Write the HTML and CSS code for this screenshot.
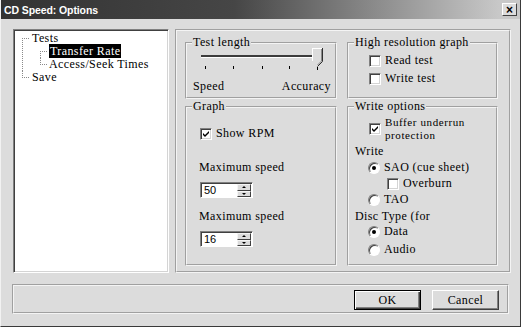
FILE: index.html
```html
<!DOCTYPE html>
<html lang="en">
<head>
    <meta charset="UTF-8">
    <title>CD Speed: Options</title>
    <link rel="stylesheet" href="styles.css">
</head>
<body>
    <div class="window">
        <div class="titlebar">
            <span class="title">CD Speed: Options</span>
            <span class="close">&#215;</span>
        </div>

        <div class="main">
            <div class="tree">
                <ul class="tree-root">
                    <li class="first"><span>Tests</span>
                        <ul>
                            <li class="first"><span class="selected">Transfer Rate</span></li>
                            <li class="last"><span>Access/Seek Times</span></li>
                        </ul>
                    </li>
                    <li class="last"><span>Save</span></li>
                </ul>
            </div>

            <div class="page">
                <fieldset class="group top-row">
                    <legend>Test length</legend>
                    <svg class="slider" width="126" height="24" viewBox="0 0 126 24" shape-rendering="crispEdges">
                        <rect x="1" y="8" width="117" height="2" fill="#3c3c3c"/>
                        <rect x="1" y="10" width="117" height="1" fill="#ffffff"/>
                        <g stroke="#000">
                            <line x1="5.5" y1="19" x2="5.5" y2="22"/>
                            <line x1="33.5" y1="19" x2="33.5" y2="22"/>
                            <line x1="62.5" y1="19" x2="62.5" y2="22"/>
                            <line x1="89.5" y1="19" x2="89.5" y2="22"/>
                            <line x1="117.5" y1="20" x2="117.5" y2="23"/>
                        </g>
                        <polygon points="112,1 122,1 122,14 117,19 112,14" fill="#dcdcdc"/>
                        <polyline points="112.5,14 112.5,1.5 121.5,1.5" fill="none" stroke="#fff"/>
                        <polyline points="122.5,1 122.5,14.5 117.5,19.5" fill="none" stroke="#303030" shape-rendering="auto"/>
                        <polyline points="121.5,2 121.5,14 117.5,18" fill="none" stroke="#8a8a8a" shape-rendering="auto"/>
                    </svg>
                    <div class="scale-labels">
                        <span>Speed</span>
                        <span>Accuracy</span>
                    </div>
                </fieldset>

                <fieldset class="group top-row">
                    <legend>High resolution graph</legend>
                    <div class="row hires first-hires"><span class="check"></span>Read test</div>
                    <div class="row hires"><span class="check"></span>Write test</div>
                </fieldset>

                <fieldset class="group bottom-row">
                    <legend>Graph</legend>
                    <div class="row show-rpm">
                        <span class="check">
                            <svg width="8" height="8" viewBox="0 0 8 8"><path d="M1 3 L3 5 L7 1 L7 3 L3 7 L1 5 Z" fill="#000"/></svg>
                        </span>Show RPM
                    </div>
                    <div class="field-label first-label">Maximum speed</div>
                    <div class="spin">
                        <span class="spin-value">50</span>
                        <span class="spin-btns">
                            <span class="spin-btn"><span class="arrow up"></span></span>
                            <span class="spin-btn"><span class="arrow down"></span></span>
                        </span>
                    </div>
                    <div class="field-label">Maximum speed</div>
                    <div class="spin">
                        <span class="spin-value">16</span>
                        <span class="spin-btns">
                            <span class="spin-btn"><span class="arrow up"></span></span>
                            <span class="spin-btn"><span class="arrow down"></span></span>
                        </span>
                    </div>
                </fieldset>

                <fieldset class="group bottom-row">
                    <legend>Write options</legend>
                    <div class="row buffer">
                        <span class="check">
                            <svg width="8" height="8" viewBox="0 0 8 8"><path d="M1 3 L3 5 L7 1 L7 3 L3 7 L1 5 Z" fill="#000"/></svg>
                        </span>
                        <span class="buffer-text">Buffer underrun<br>protection</span>
                    </div>
                    <div class="line write-head">Write</div>
                    <div class="row opt sao"><span class="radio on"></span>SAO (cue sheet)</div>
                    <div class="row opt overburn"><span class="check"></span>Overburn</div>
                    <div class="row opt tao"><span class="radio"></span>TAO</div>
                    <div class="line disc-head">Disc Type (for</div>
                    <div class="row opt data"><span class="radio on"></span>Data</div>
                    <div class="row opt audio"><span class="radio"></span>Audio</div>
                </fieldset>
            </div>
        </div>

        <div class="footer">
            <span class="btn default">OK</span>
            <span class="btn">Cancel</span>
        </div>
    </div>
</body>
</html>
```

FILE: styles.css
```css
body {
    margin: 0;
    background-color: #dcdcdc;
}
.window {
    width: 521px;
    height: 327px;
    box-sizing: border-box;
    background-color: #dcdcdc;
    border-left: 1px solid #f2f2f2;
    border-right: 1px solid #3a3a3a;
    border-bottom: 1px solid #3a3a3a;
    font-family: "Liberation Serif", serif;
    font-size: 12px;
    letter-spacing: 0.4px;
    line-height: 13px;
    color: #000;
}
.titlebar {
    height: 19px;
    display: flex;
    align-items: center;
    justify-content: space-between;
    padding: 0 3px 0 3px;
    background: linear-gradient(90deg, #333 0%, #464646 45%, #c8c8c8 96%);
}
.title {
    font: bold 10.5px "Liberation Sans", sans-serif;
    letter-spacing: -0.1px;
    color: #fff;
}
.close {
    width: 15px;
    height: 13px;
    box-sizing: border-box;
    display: flex;
    align-items: center;
    justify-content: center;
    background-color: #dcdcdc;
    border: 1px solid;
    border-color: #fff #404040 #404040 #fff;
    font: bold 12px "Liberation Sans", sans-serif;
    letter-spacing: 0;
    line-height: 1;
}
.main {
    display: flex;
    gap: 6px;
    padding: 10px 0 0 12px;
}
.tree {
    width: 156px;
    height: 244px;
    box-sizing: border-box;
    background-color: #fff;
    border: 1px solid;
    border-color: #808080 #fff #fff #808080;
    box-shadow: inset 1px 1px 0 #404040, inset -1px -1px 0 #d4d4d4;
    padding: 2px 0 0 8px;
}
.tree ul {
    list-style: none;
    margin: 0;
    padding: 0;
}
.tree li {
    padding-left: 10px;
    background-image:
        repeating-linear-gradient(90deg, #8a8a8a 0 1px, transparent 1px 2px),
        repeating-linear-gradient(180deg, #8a8a8a 0 1px, transparent 1px 2px);
    background-size: 8px 1px, 1px 100%;
    background-position: 0 6px, 0 0;
    background-repeat: no-repeat;
}
.tree li.first {
    background-position: 0 6px, 0 6px;
}
.tree li.last {
    background-size: 8px 1px, 1px 7px;
}
.tree li ul {
    margin-left: 8px;
}
.tree li li {
    padding-left: 9px;
}
.selected {
    background-color: #000;
    color: #fff;
    padding: 0 1px;
}
.page {
    width: 336px;
    height: 244px;
    box-sizing: border-box;
    border: 2px groove #f4f4f4;
    padding: 5px 11px 0 8px;
    display: grid;
    grid-template-columns: 152px 151px;
    grid-template-rows: 63px 166px;
    column-gap: 10px;
    row-gap: 1px;
}
.group {
    margin: 0;
    padding: 0 4px 0 6px;
    border: 2px groove #f4f4f4;
    min-width: 0;
    box-sizing: border-box;
}
.group legend {
    padding: 0 1px;
    margin-left: -1px;
    line-height: 13px;
}
.slider {
    display: block;
    margin: -2px 0 0 7px;
}
.scale-labels {
    display: flex;
    justify-content: space-between;
    margin-top: 9px;
}
.row {
    display: flex;
    align-items: center;
    gap: 4px;
    height: 13px;
}
.hires {
    margin: 5px 0 0 14px;
}
.show-rpm {
    margin: 14px 0 0 7px;
}
.field-label {
    margin: 12px 0 0 6px;
}
.first-label {
    margin-top: 21px;
}
.check {
    width: 12px;
    height: 12px;
    flex: none;
    box-sizing: border-box;
    display: flex;
    align-items: center;
    justify-content: center;
    background-color: #fff;
    border: 1px solid;
    border-color: #808080 #fff #fff #808080;
    box-shadow: inset 1px 1px 0 #404040, inset -1px -1px 0 #d4d4d4;
}
.radio {
    width: 12px;
    height: 12px;
    flex: none;
    box-sizing: border-box;
    display: flex;
    align-items: center;
    justify-content: center;
    background-color: #fff;
    border-radius: 50%;
    border: 1px solid;
    border-color: #808080 #fff #fff #808080;
    box-shadow: inset 1px 1px 0 #404040;
}
.radio.on::after {
    content: "";
    width: 4px;
    height: 4px;
    border-radius: 50%;
    background-color: #000;
}
.spin {
    display: flex;
    width: 53px;
    height: 16px;
    box-sizing: border-box;
    margin: 8px 0 0 7px;
    background-color: #fff;
    border: 1px solid;
    border-color: #808080 #fff #fff #808080;
    box-shadow: inset 1px 1px 0 #404040;
    padding: 1px 1px 0 1px;
}
.spin-value {
    flex: 1;
    font: 11px "Liberation Sans", sans-serif;
    letter-spacing: 0;
    line-height: 13px;
    padding-left: 2px;
}
.spin-btns {
    width: 14px;
    display: flex;
    flex-direction: column;
}
.spin-btn {
    flex: 1;
    box-sizing: border-box;
    display: flex;
    align-items: center;
    justify-content: center;
    background-color: #dcdcdc;
    border: 1px solid;
    border-color: #f4f4f4 #404040 #404040 #f4f4f4;
}
.arrow {
    width: 0;
    height: 0;
    border-left: 2px solid transparent;
    border-right: 2px solid transparent;
}
.arrow.up {
    border-bottom: 2px solid #000;
}
.arrow.down {
    border-top: 2px solid #000;
}
.buffer {
    height: 26px;
    margin: 3px 0 0 14px;
}
.buffer-text {
    font-size: 11px;
    letter-spacing: 0.6px;
    line-height: 13px;
}
.write-head {
    margin-top: 3px;
}
.opt {
    margin: 3px 0 0 13px;
}
.overburn {
    margin-left: 32px;
}
.disc-head {
    margin-top: 4px;
}
.data {
    margin-top: 2px;
}
.audio {
    margin-top: 5px;
}
.footer {
    width: 497px;
    height: 30px;
    box-sizing: border-box;
    margin: 11px 0 0 11px;
    border: 2px groove #f4f4f4;
    display: flex;
    justify-content: flex-end;
    gap: 11px;
    padding: 4px 8px 0 0;
}
.btn {
    width: 67px;
    height: 20px;
    box-sizing: border-box;
    display: flex;
    align-items: center;
    justify-content: center;
    background-color: #dcdcdc;
    border: 1px solid;
    border-color: #fff #404040 #404040 #fff;
    box-shadow: inset -1px -1px 0 #808080;
}
.btn.default {
    border-color: #000;
    box-shadow: inset 1px 1px 0 #fff, inset -1px -1px 0 #404040, inset -2px -2px 0 #808080;
}
```
